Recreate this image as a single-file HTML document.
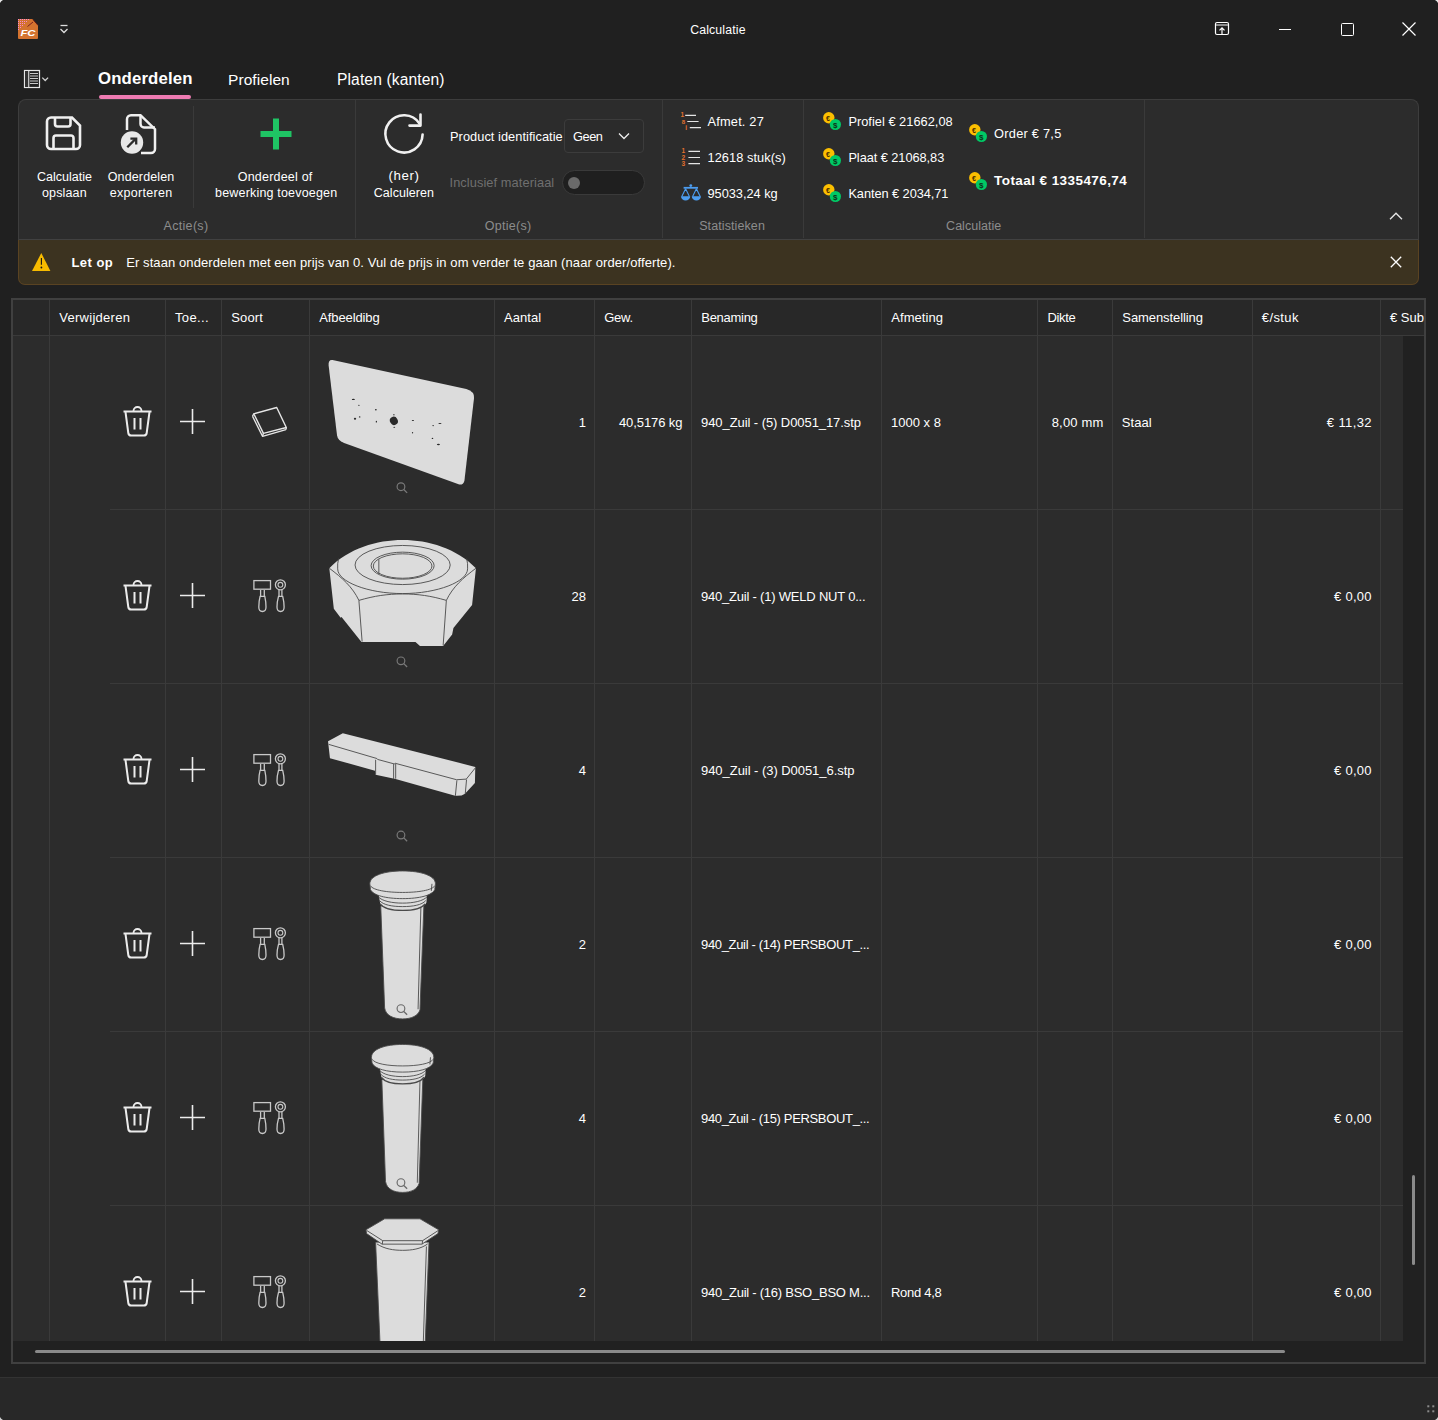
<!DOCTYPE html>
<html><head><meta charset="utf-8"><title>Calculatie</title>
<style>
html,body{margin:0;padding:0;}
body{width:1438px;height:1420px;position:relative;overflow:hidden;background:#202020;font-family:"Liberation Sans", sans-serif;}
.t{position:absolute;line-height:0;white-space:nowrap;}
svg{overflow:visible;}
</style></head><body>
<svg style="position:absolute;left:18px;top:19px;" width="20" height="20" viewBox="0 0 20 20">
<defs><pattern id="pd" width="2" height="2" patternUnits="userSpaceOnUse"><rect x="0" y="0" width="1" height="1" fill="#f48ad0"/></pattern></defs>
<path d="M1 0 H14.5 L20 6.3 V19 a1 1 0 0 1 -1 1 H1 a1 1 0 0 1 -1 -1 V1 a1 1 0 0 1 1 -1 Z" fill="#d4732f"/>
<path d="M0 0 H12 L0 12 Z" fill="url(#pd)"/>
<path d="M15 3 L9.5 7.5" stroke="#7a1f1f" stroke-width="1"/>
<path d="M15 0.5 L20 6.3" stroke="#5a1818" stroke-width="1"/>
<text x="2.5" y="17" font-family="Liberation Sans" font-weight="bold" font-style="italic" font-size="9.6" textLength="15" lengthAdjust="spacingAndGlyphs" fill="#fff">FC</text>
</svg>
<svg style="position:absolute;left:58px;top:23px;" width="12" height="12" viewBox="0 0 12 12"><path d="M2.5 2.5 H9.5" stroke="#ddd" stroke-width="1.3"/><path d="M2.5 6 L6 9.5 L9.5 6" stroke="#ddd" stroke-width="1.3" fill="none"/></svg>
<div class="t" style="left:417.92px;width:600px;text-align:center;top:29.74px;font-size:12.3px;color:#ffffff;letter-spacing:0.143px;">Calculatie</div>
<svg style="position:absolute;left:1214px;top:21px;" width="17" height="16" viewBox="0 0 17 16"><rect x="1.5" y="1.5" width="13" height="12" rx="1.5" fill="none" stroke="#fff" stroke-width="1.2"/><path d="M2 4 H14" stroke="#aaa" stroke-width="1.6"/><path d="M8 13.5 V7 M5.5 9.3 L8 6.8 L10.5 9.3" fill="none" stroke="#fff" stroke-width="1.2"/></svg>
<div style="position:absolute;left:1279px;top:29px;width:12px;height:1px;background:#ffffff;"></div>
<svg style="position:absolute;left:1340px;top:22px;" width="15" height="15" viewBox="0 0 15 15"><rect x="1.5" y="1.5" width="12" height="12" rx="1" fill="none" stroke="#fff" stroke-width="1"/></svg>
<svg style="position:absolute;left:1401px;top:21px;" width="16" height="16" viewBox="0 0 16 16"><path d="M1.5 1.5 L14.5 14.5 M14.5 1.5 L1.5 14.5" stroke="#fff" stroke-width="1.2"/></svg>
<svg style="position:absolute;left:23px;top:69px;" width="27" height="21" viewBox="0 0 27 21">
<rect x="1.5" y="1.5" width="15" height="17" fill="none" stroke="#e6e6e6" stroke-width="1.2"/>
<path d="M5.7 1.5 V18.5" stroke="#e6e6e6" stroke-width="1.2"/><rect x="2.1" y="2.1" width="3" height="15.8" fill="#333"/>
<path d="M7 4.5 H15 M7 7 H15 M7 9.5 H15 M7 12 H15 M7 14.5 H15" stroke="#c8c8c8" stroke-width="1"/>
<path d="M19.3 8.6 L22.2 11.5 L25.1 8.6" fill="none" stroke="#d0d0d0" stroke-width="1.3"/>
</svg>
<div class="t" style="left:98px;top:79.18px;font-size:16.8px;color:#ffffff;font-weight:bold;letter-spacing:0.139px;">Onderdelen</div>
<div style="position:absolute;left:99px;top:95px;width:92px;height:4px;background:#ee7bb2;border-radius:2px;"></div>
<div class="t" style="left:228px;top:79.63px;font-size:15.5px;color:#ffffff;letter-spacing:0.066px;">Profielen</div>
<div class="t" style="left:337px;top:79.59px;font-size:15.6px;color:#ffffff;letter-spacing:0.122px;">Platen (kanten)</div>
<div style="position:absolute;left:18px;top:99px;width:1399px;height:139px;background:#2c2c2c;border:1px solid #3d3d3d;border-bottom:1px solid #414141;border-radius:8px 8px 0 0;"></div>
<div style="position:absolute;left:18px;top:240px;width:1399px;height:44px;background:#3c3320;border:1px solid #5a4322;border-top:none;border-radius:0 0 7px 7px;"></div>
<div style="position:absolute;left:355px;top:100px;width:1px;height:138px;background:#3a3a3a;"></div>
<div style="position:absolute;left:662px;top:100px;width:1px;height:138px;background:#3a3a3a;"></div>
<div style="position:absolute;left:803px;top:100px;width:1px;height:138px;background:#3a3a3a;"></div>
<div style="position:absolute;left:1144px;top:100px;width:1px;height:138px;background:#3a3a3a;"></div>
<div style="position:absolute;left:193px;top:106px;width:1px;height:102px;background:#3a3a3a;"></div>
<svg style="position:absolute;left:45px;top:115px;" width="38" height="38" viewBox="0 0 38 38">
<path d="M6 2.5 H27 L35 10.5 V30 a4 4 0 0 1 -4 4 H6 a4 4 0 0 1 -4 -4 V6.5 a4 4 0 0 1 4 -4 Z" fill="none" stroke="#f0f0f0" stroke-width="2.6"/>
<path d="M10 3 V9 a2.5 2.5 0 0 0 2.5 2.5 H23 a2.5 2.5 0 0 0 2.5 -2.5 V3" fill="none" stroke="#f0f0f0" stroke-width="2.6"/>
<path d="M8.5 34 V23 a2.5 2.5 0 0 1 2.5 -2.5 H26 a2.5 2.5 0 0 1 2.5 2.5 V34" fill="none" stroke="#f0f0f0" stroke-width="2.6"/>
</svg>
<div class="t" style="left:-235.49px;width:600px;text-align:center;top:176.67px;font-size:12.5px;color:#ffffff;letter-spacing:0.012px;">Calculatie</div>
<div class="t" style="left:-235.62px;width:600px;text-align:center;top:192.67px;font-size:12.5px;color:#ffffff;letter-spacing:0.169px;">opslaan</div>
<svg style="position:absolute;left:118px;top:112px;" width="42" height="44" viewBox="0 0 42 44">
<path d="M9 18 V7.2 a4 4 0 0 1 4 -4 H22.5 L37 17.2 V37 a4 4 0 0 1 -4 4 H23" fill="none" stroke="#f0f0f0" stroke-width="2.5"/>
<path d="M22.5 3.2 V12 a3.5 3.5 0 0 0 3.5 3.5 H37" fill="none" stroke="#f0f0f0" stroke-width="2.5"/>
<circle cx="14" cy="30.5" r="11.2" fill="#e8e8e8"/>
<path d="M9.3 35.2 L17.6 26.9" stroke="#2c2c2c" stroke-width="2.3"/><path d="M12.4 26.6 H18.2 V32.4" fill="none" stroke="#2c2c2c" stroke-width="2.3"/>
</svg>
<div class="t" style="left:-158.93px;width:600px;text-align:center;top:176.67px;font-size:12.5px;color:#ffffff;letter-spacing:0.130px;">Onderdelen</div>
<div class="t" style="left:-158.85px;width:600px;text-align:center;top:192.67px;font-size:12.5px;color:#ffffff;letter-spacing:0.304px;">exporteren</div>
<svg style="position:absolute;left:258px;top:116px;" width="36" height="36" viewBox="0 0 36 36"><path d="M18 2.5 V33.5 M2.5 18 H33.5" stroke="#1fc464" stroke-width="6"/></svg>
<div class="t" style="left:-24.90px;width:600px;text-align:center;top:176.67px;font-size:12.5px;color:#ffffff;letter-spacing:0.203px;">Onderdeel of</div>
<div class="t" style="left:-23.81px;width:600px;text-align:center;top:192.67px;font-size:12.5px;color:#ffffff;letter-spacing:0.176px;">bewerking toevoegen</div>
<div class="t" style="left:-114.04px;width:600px;text-align:center;top:225.67px;font-size:12.5px;color:#8c8c8c;letter-spacing:0.319px;">Actie(s)</div>
<svg style="position:absolute;left:380px;top:110px;" width="48" height="48" viewBox="0 0 48 48">
<path d="M42.6 24.5 A18.6 18.6 0 1 1 39.5 13.6" fill="none" stroke="#f0f0f0" stroke-width="2.6" stroke-linecap="round"/>
<path d="M29.5 15.6 H40.5 V4.6" fill="none" stroke="#f0f0f0" stroke-width="2.6" stroke-linecap="round" stroke-linejoin="round"/>
</svg>
<div class="t" style="left:104.05px;width:600px;text-align:center;top:176.39px;font-size:13.3px;color:#ffffff;letter-spacing:0.605px;">(her)</div>
<div class="t" style="left:103.87px;width:600px;text-align:center;top:192.67px;font-size:12.5px;color:#ffffff;letter-spacing:0.038px;">Calculeren</div>
<div class="t" style="left:450px;top:136.56px;font-size:12.8px;color:#ffffff;letter-spacing:0.050px;">Product identificatie</div>
<div style="position:absolute;left:564px;top:119px;width:78px;height:32px;border:1px solid #3c3c3c;border-radius:4px;background:#2b2b2b;"></div>
<div class="t" style="left:573px;top:136.56px;font-size:12.8px;color:#ffffff;letter-spacing:-0.471px;">Geen</div>
<svg style="position:absolute;left:617px;top:131px;" width="14" height="10" viewBox="0 0 14 10"><path d="M2 2.5 L7 7.5 L12 2.5" fill="none" stroke="#eee" stroke-width="1.3"/></svg>
<div class="t" style="left:449.5px;top:182.56px;font-size:12.8px;color:#6f6f6f;letter-spacing:0.086px;">Inclusief materiaal</div>
<div style="position:absolute;left:562px;top:170px;width:81px;height:23px;border:1px solid #3a3a3a;border-radius:13px;background:#1f1f1f;"></div>
<svg style="position:absolute;left:567px;top:176px;" width="14" height="14" viewBox="0 0 14 14"><circle cx="7" cy="7" r="6" fill="#6a6a6a"/></svg>
<div class="t" style="left:208.14px;width:600px;text-align:center;top:225.67px;font-size:12.5px;color:#8c8c8c;letter-spacing:0.278px;">Optie(s)</div>
<svg style="position:absolute;left:680px;top:110px;" width="24" height="22" viewBox="0 0 24 22">
<g font-family="Liberation Sans" font-weight="bold" fill="#e2702c">
<text x="0.6" y="7.2" font-size="6.6">1</text>
<text x="1.8" y="13.8" font-size="6">8</text>
<text x="5.2" y="20.2" font-size="6.6">i</text>
</g>
<path d="M5.2 5.4 H16 M7.3 11.5 H18.6 M9.8 17.7 H21" stroke="#e4e4e4" stroke-width="1.2"/>
</svg>
<div class="t" style="left:707.5px;top:121.56px;font-size:12.8px;color:#ffffff;letter-spacing:0.190px;">Afmet. 27</div>
<svg style="position:absolute;left:680px;top:146px;" width="24" height="22" viewBox="0 0 24 22">
<g font-family="Liberation Sans" font-weight="bold" fill="#e2702c" font-size="6.6">
<text x="1.6" y="7">1</text>
<text x="1.6" y="13.6">2</text>
<text x="1.6" y="19.8">3</text>
</g>
<path d="M8.4 5.3 H20 M8.4 11.5 H20 M8.4 17.7 H20" stroke="#e4e4e4" stroke-width="1.2"/>
</svg>
<div class="t" style="left:707.5px;top:157.56px;font-size:12.8px;color:#ffffff;letter-spacing:0.054px;">12618 stuk(s)</div>
<svg style="position:absolute;left:680px;top:183px;" width="24" height="22" viewBox="0 0 24 22">
<circle cx="10.8" cy="2.6" r="1.4" fill="#4c9df0"/>
<path d="M3.6 4.8 H18" stroke="#4c9df0" stroke-width="1.8"/>
<path d="M5.6 5.8 L1.8 13.6 M5.6 5.8 L9.4 13.6 M16.4 5.8 L12.6 13.6 M16.4 5.8 L20.2 13.6" stroke="#4c9df0" stroke-width="1.1" fill="none"/>
<path d="M1 13.2 H10.2 A4.6 4.4 0 0 1 1 13.2 Z M11.8 13.2 H21 A4.6 4.4 0 0 1 11.8 13.2 Z" fill="#4c9df0"/>
</svg>
<div class="t" style="left:707.5px;top:193.56px;font-size:12.8px;color:#ffffff;letter-spacing:-0.026px;">95033,24 kg</div>
<div class="t" style="left:432.05px;width:600px;text-align:center;top:225.67px;font-size:12.5px;color:#8c8c8c;letter-spacing:0.098px;">Statistieken</div>
<svg style="position:absolute;left:822px;top:111px;" width="22" height="22" viewBox="0 0 22 22">
<circle cx="6.8" cy="6.8" r="5.7" fill="#fcbf00"/>
<text x="4" y="9.5" font-family="Liberation Sans" font-weight="bold" font-size="7.2" fill="#4a2e00">€</text>
<circle cx="13.4" cy="13.5" r="5.6" fill="#00c965"/>
<text x="11" y="16.6" font-family="Liberation Sans" font-weight="bold" font-size="8" fill="#0c3318">$</text>
</svg>
<div class="t" style="left:848.4px;top:121.56px;font-size:12.8px;color:#ffffff;letter-spacing:0.023px;">Profiel € 21662,08</div>
<svg style="position:absolute;left:822px;top:147px;" width="22" height="22" viewBox="0 0 22 22">
<circle cx="6.8" cy="6.8" r="5.7" fill="#fcbf00"/>
<text x="4" y="9.5" font-family="Liberation Sans" font-weight="bold" font-size="7.2" fill="#4a2e00">€</text>
<circle cx="13.4" cy="13.5" r="5.6" fill="#00c965"/>
<text x="11" y="16.6" font-family="Liberation Sans" font-weight="bold" font-size="8" fill="#0c3318">$</text>
</svg>
<div class="t" style="left:848.4px;top:157.56px;font-size:12.8px;color:#ffffff;letter-spacing:-0.060px;">Plaat € 21068,83</div>
<svg style="position:absolute;left:822px;top:183px;" width="22" height="22" viewBox="0 0 22 22">
<circle cx="6.8" cy="6.8" r="5.7" fill="#fcbf00"/>
<text x="4" y="9.5" font-family="Liberation Sans" font-weight="bold" font-size="7.2" fill="#4a2e00">€</text>
<circle cx="13.4" cy="13.5" r="5.6" fill="#00c965"/>
<text x="11" y="16.6" font-family="Liberation Sans" font-weight="bold" font-size="8" fill="#0c3318">$</text>
</svg>
<div class="t" style="left:848.4px;top:193.56px;font-size:12.8px;color:#ffffff;letter-spacing:-0.065px;">Kanten € 2034,71</div>
<svg style="position:absolute;left:968px;top:123px;" width="22" height="22" viewBox="0 0 22 22">
<circle cx="6.8" cy="6.8" r="5.7" fill="#fcbf00"/>
<text x="4" y="9.5" font-family="Liberation Sans" font-weight="bold" font-size="7.2" fill="#4a2e00">€</text>
<circle cx="13.4" cy="13.5" r="5.6" fill="#00c965"/>
<text x="11" y="16.6" font-family="Liberation Sans" font-weight="bold" font-size="8" fill="#0c3318">$</text>
</svg>
<div class="t" style="left:994.1px;top:133.56px;font-size:12.8px;color:#ffffff;letter-spacing:0.246px;">Order € 7,5</div>
<svg style="position:absolute;left:968px;top:171px;" width="22" height="22" viewBox="0 0 22 22">
<circle cx="6.8" cy="6.8" r="5.7" fill="#fcbf00"/>
<text x="4" y="9.5" font-family="Liberation Sans" font-weight="bold" font-size="7.2" fill="#4a2e00">€</text>
<circle cx="13.4" cy="13.5" r="5.6" fill="#00c965"/>
<text x="11" y="16.6" font-family="Liberation Sans" font-weight="bold" font-size="8" fill="#0c3318">$</text>
</svg>
<div class="t" style="left:994.1px;top:181.32px;font-size:13.5px;color:#ffffff;font-weight:bold;letter-spacing:0.423px;">Totaal € 1335476,74</div>
<div class="t" style="left:673.66px;width:600px;text-align:center;top:225.67px;font-size:12.5px;color:#8c8c8c;letter-spacing:0.023px;">Calculatie</div>
<svg style="position:absolute;left:1388px;top:210.3px;" width="16" height="12" viewBox="0 0 16 12"><path d="M2 9.2 L8 3.2 L14 9.2" fill="none" stroke="#e8e8e8" stroke-width="1.3"/></svg>
<svg style="position:absolute;left:31px;top:252px;" width="20" height="20" viewBox="0 0 20 20"><path d="M10.3 1 L19.4 19 H1 Z" fill="#f7bb00"/><path d="M10.4 6.1 V12.7" stroke="#151515" stroke-width="1.1"/><circle cx="10.4" cy="15.5" r="0.9" fill="#151515"/></svg>
<div class="t" style="left:71.4px;top:262.50px;font-size:13px;color:#ffffff;font-weight:bold;letter-spacing:0.481px;">Let op</div>
<div class="t" style="left:126.2px;top:262.50px;font-size:13px;color:#ffffff;letter-spacing:0.092px;">Er staan onderdelen met een prijs van 0. Vul de prijs in om verder te gaan (naar order/offerte).</div>
<svg style="position:absolute;left:1389px;top:255px;" width="14" height="14" viewBox="0 0 14 14"><path d="M1.8 1.8 L12.2 12.2 M12.2 1.8 L1.8 12.2" stroke="#fff" stroke-width="1.3"/></svg>
<div style="position:absolute;left:11px;top:298px;width:1411px;height:1062px;border:2px solid #404040;background:#2c2c2c;"></div>
<div style="position:absolute;left:13px;top:300px;width:1411px;height:35px;background:#282828;"></div>
<div style="position:absolute;left:13px;top:335px;width:1411px;height:1px;background:#3a3a3a;"></div>
<div style="position:absolute;left:1403px;top:336px;width:21px;height:1026px;background:#212121;"></div>
<div style="position:absolute;left:13px;top:1341px;width:1411px;height:21px;background:#212121;"></div>
<div style="position:absolute;left:34.5px;top:1349.6px;width:1250.5px;height:3.6px;background:#8a8a8a;border-radius:2px;"></div>
<div style="position:absolute;left:1411.6px;top:1175px;width:3.6px;height:90px;background:#8a8a8a;border-radius:2px;"></div>
<div style="position:absolute;left:49px;top:300px;width:1px;height:1041px;background:#3a3a3a;"></div>
<div style="position:absolute;left:165px;top:300px;width:1px;height:1041px;background:#3a3a3a;"></div>
<div style="position:absolute;left:221px;top:300px;width:1px;height:1041px;background:#3a3a3a;"></div>
<div style="position:absolute;left:309px;top:300px;width:1px;height:1041px;background:#3a3a3a;"></div>
<div style="position:absolute;left:494px;top:300px;width:1px;height:1041px;background:#3a3a3a;"></div>
<div style="position:absolute;left:594px;top:300px;width:1px;height:1041px;background:#3a3a3a;"></div>
<div style="position:absolute;left:691px;top:300px;width:1px;height:1041px;background:#3a3a3a;"></div>
<div style="position:absolute;left:881px;top:300px;width:1px;height:1041px;background:#3a3a3a;"></div>
<div style="position:absolute;left:1037px;top:300px;width:1px;height:1041px;background:#3a3a3a;"></div>
<div style="position:absolute;left:1112px;top:300px;width:1px;height:1041px;background:#3a3a3a;"></div>
<div style="position:absolute;left:1252px;top:300px;width:1px;height:1041px;background:#3a3a3a;"></div>
<div style="position:absolute;left:1380px;top:300px;width:1px;height:1041px;background:#3a3a3a;"></div>
<div style="position:absolute;left:110px;top:509px;width:1293px;height:1px;background:#3a3a3a;"></div>
<div style="position:absolute;left:110px;top:683px;width:1293px;height:1px;background:#3a3a3a;"></div>
<div style="position:absolute;left:110px;top:857px;width:1293px;height:1px;background:#3a3a3a;"></div>
<div style="position:absolute;left:110px;top:1031px;width:1293px;height:1px;background:#3a3a3a;"></div>
<div style="position:absolute;left:110px;top:1205px;width:1293px;height:1px;background:#3a3a3a;"></div>
<div class="t" style="left:59.3px;top:317.50px;font-size:13px;color:#ffffff;letter-spacing:0.267px;">Verwijderen</div>
<div class="t" style="left:175px;top:317.50px;font-size:13px;color:#ffffff;letter-spacing:0.341px;">Toe...</div>
<div class="t" style="left:231.3px;top:317.50px;font-size:13px;color:#ffffff;letter-spacing:0.132px;">Soort</div>
<div class="t" style="left:319.3px;top:317.50px;font-size:13px;color:#ffffff;letter-spacing:-0.115px;">Afbeeldibg</div>
<div class="t" style="left:504px;top:317.50px;font-size:13px;color:#ffffff;letter-spacing:0.068px;">Aantal</div>
<div class="t" style="left:604.2px;top:317.50px;font-size:13px;color:#ffffff;letter-spacing:-0.275px;">Gew.</div>
<div class="t" style="left:701.3px;top:317.50px;font-size:13px;color:#ffffff;letter-spacing:-0.291px;">Benaming</div>
<div class="t" style="left:891.3px;top:317.50px;font-size:13px;color:#ffffff;letter-spacing:0.057px;">Afmeting</div>
<div class="t" style="left:1047.5px;top:317.50px;font-size:13px;color:#ffffff;letter-spacing:-0.355px;">Dikte</div>
<div class="t" style="left:1122.3px;top:317.50px;font-size:13px;color:#ffffff;letter-spacing:-0.080px;">Samenstelling</div>
<div class="t" style="left:1261.8px;top:317.50px;font-size:13px;color:#ffffff;letter-spacing:0.403px;">€/stuk</div>
<div style="position:absolute;left:1381px;top:300px;width:43px;height:35px;overflow:hidden;"><div class="t" style="left:9px;top:17.50px;font-size:13px;color:#fff">€ Sub</div></div>
<svg style="position:absolute;left:310px;top:340px" width="185" height="170" viewBox="0 0 1438 1321">
<path d="M175 155 L1215 380 Q1280 400 1275 450 L1200 1095 Q1190 1130 1155 1122 L265 800 Q215 780 210 740 L145 200 Q140 150 175 155 Z" fill="#dcdcdc"/>
<g fill="#2a2a2a">
<ellipse cx="652" cy="628" rx="30" ry="33" transform="rotate(-30 652 628)"/>
<ellipse cx="337" cy="462" rx="12" ry="5"/>
<ellipse cx="380" cy="507" rx="6" ry="4"/>
<ellipse cx="512" cy="542" rx="7" ry="5"/>
<ellipse cx="386" cy="598" rx="6" ry="5"/>
<ellipse cx="350" cy="612" rx="9" ry="7"/>
<ellipse cx="516" cy="635" rx="5" ry="7"/>
<ellipse cx="652" cy="580" rx="7" ry="4"/>
<ellipse cx="655" cy="678" rx="7" ry="4"/>
<ellipse cx="800" cy="625" rx="9" ry="4"/>
<ellipse cx="797" cy="720" rx="5" ry="6"/>
<ellipse cx="957" cy="665" rx="6" ry="5"/>
<ellipse cx="1010" cy="648" rx="12" ry="4"/>
<ellipse cx="952" cy="765" rx="6" ry="5"/>
<ellipse cx="998" cy="812" rx="12" ry="5"/>
</g>
<circle cx="707" cy="1140" r="30" fill="none" stroke="#7a7a7a" stroke-width="9"/><path d="M729 1162 L755 1188" stroke="#7a7a7a" stroke-width="10"/>
</svg>
<svg style="position:absolute;left:310px;top:520px" width="185" height="160" viewBox="0 0 1438 1244">
<path d="M150 375 C300 220 520 155 720 155 C920 155 1140 220 1290 375 L1260 660 L1115 840 L1105 890 L1035 980 L855 980 L820 948 L400 948 L245 755 L238 760 L185 690 Z" fill="#dcdcdc"/>
<g fill="none" stroke="#4a4a4a" stroke-width="7">
<path d="M150 375 C250 450 330 520 380 625 C500 590 600 575 720 575 C840 575 940 590 1060 625 C1110 520 1190 450 1290 375"/>
<path d="M380 625 L405 945 M1060 625 L1035 975"/>
<path d="M222 300 Q212 340 215 380 C215 480 450 572 720 572 C990 572 1225 480 1225 380 Q1228 340 1218 300"/>
<ellipse cx="720" cy="350" rx="370" ry="152"/>
<ellipse cx="720" cy="355" rx="245" ry="105"/>
<ellipse cx="720" cy="358" rx="228" ry="95"/>
<path d="M535 305 L535 420"/>
</g>
<circle cx="707" cy="1095" r="30" fill="none" stroke="#7a7a7a" stroke-width="9"/><path d="M729 1117 L755 1143" stroke="#7a7a7a" stroke-width="10"/>
</svg>
<svg style="position:absolute;left:310px;top:700px" width="185" height="160" viewBox="0 0 1438 1244">
<path d="M140 320 L255 258 L1285 520 L1282 645 L1205 728 Q1180 748 1128 745 L665 615 L510 582 L505 550 L155 452 Z" fill="#dcdcdc"/>
<g fill="none" stroke="#4a4a4a" stroke-width="7">
<path d="M145 345 L520 455 L525 462 L655 497 L662 492 L1140 620 L1215 615 L1285 528"/>
<path d="M510 465 L510 580 M650 498 L650 615 M666 495 L666 612 M1142 625 L1130 745 M1217 618 L1207 730"/>
</g>
<circle cx="707" cy="1050" r="30" fill="none" stroke="#7a7a7a" stroke-width="9"/><path d="M729 1072 L755 1098" stroke="#7a7a7a" stroke-width="10"/>
</svg>
<svg style="position:absolute;left:310px;top:860px" width="185" height="170" viewBox="0 0 1438 1321">
<g transform="translate(720 0) scale(1.0 1) translate(-720 0)">
<path d="M550 360 L580 1150 C590 1210 650 1235 720 1235 C790 1235 840 1210 855 1165 L885 360 Z" fill="#dcdcdc"/>
<path d="M530 250 L910 250 L905 330 C890 400 550 400 545 335 Z" fill="#dcdcdc"/>
<path d="M465 185 C465 120 580 85 720 85 C860 85 975 120 975 185 L970 230 C950 275 850 300 720 300 C590 300 490 275 470 230 Z" fill="#dcdcdc"/>
<g fill="none" stroke="#4a4a4a" stroke-width="7">
<path d="M465 185 C465 120 580 85 720 85 C860 85 975 120 975 185 L970 230 C950 275 850 300 720 300 C590 300 490 275 470 230 Z"/>
<path d="M470 200 C490 235 600 252 720 252 C840 252 950 235 970 200"/>
<path d="M948 185 L943 240"/>
<path d="M530 285 C560 320 640 335 720 335 C800 335 880 320 910 285"/>
<path d="M540 315 C570 350 640 362 720 362 C800 362 870 350 900 315"/>
<path d="M545 340 C575 380 640 392 720 392 C800 392 865 380 895 340" stroke-width="10"/>
<path d="M550 360 L580 1150 C590 1210 650 1235 720 1235 C790 1235 840 1210 855 1165 L885 360"/>
<path d="M862 365 L840 1160"/>
</g>
</g>
<circle cx="707" cy="1155" r="30" fill="none" stroke="#6a6a6a" stroke-width="9"/><path d="M729 1177 L755 1203" stroke="#6a6a6a" stroke-width="10"/>
</svg>
<svg style="position:absolute;left:310px;top:1034px" width="185" height="170" viewBox="0 0 1438 1321">
<g transform="translate(720 -4) scale(0.95 1) translate(-720 0)">
<path d="M550 360 L580 1150 C590 1210 650 1235 720 1235 C790 1235 840 1210 855 1165 L885 360 Z" fill="#dcdcdc"/>
<path d="M530 250 L910 250 L905 330 C890 400 550 400 545 335 Z" fill="#dcdcdc"/>
<path d="M465 185 C465 120 580 85 720 85 C860 85 975 120 975 185 L970 230 C950 275 850 300 720 300 C590 300 490 275 470 230 Z" fill="#dcdcdc"/>
<g fill="none" stroke="#4a4a4a" stroke-width="7">
<path d="M465 185 C465 120 580 85 720 85 C860 85 975 120 975 185 L970 230 C950 275 850 300 720 300 C590 300 490 275 470 230 Z"/>
<path d="M470 200 C490 235 600 252 720 252 C840 252 950 235 970 200"/>
<path d="M948 185 L943 240"/>
<path d="M530 285 C560 320 640 335 720 335 C800 335 880 320 910 285"/>
<path d="M540 315 C570 350 640 362 720 362 C800 362 870 350 900 315"/>
<path d="M545 340 C575 380 640 392 720 392 C800 392 865 380 895 340" stroke-width="10"/>
<path d="M550 360 L580 1150 C590 1210 650 1235 720 1235 C790 1235 840 1210 855 1165 L885 360"/>
<path d="M862 365 L840 1160"/>
</g>
</g>
<circle cx="707" cy="1155" r="30" fill="none" stroke="#6a6a6a" stroke-width="9"/><path d="M729 1177 L755 1203" stroke="#6a6a6a" stroke-width="10"/>
</svg>
<div style="position:absolute;left:310px;top:1204px;width:185px;height:137px;overflow:hidden;"><svg style="position:absolute;left:0;top:0" width="185" height="140" viewBox="0 0 1438 1088">
<path d="M510 300 L545 1100 L895 1100 L925 300 Z" fill="#dcdcdc"/>
<path d="M435 200 L580 115 L855 115 L1000 200 L995 230 L870 312 L560 312 L440 230 Z" fill="#dcdcdc"/>
<g fill="none" stroke="#4a4a4a" stroke-width="7">
<path d="M435 200 L580 115 L855 115 L1000 200 L995 230 L870 312 L560 312 L440 230 Z"/>
<path d="M440 205 L565 285 L875 285 L998 205"/>
<path d="M565 285 L562 312 M875 285 L872 312"/>
<path d="M520 310 C580 350 650 360 720 360 C790 360 860 350 915 310"/>
<path d="M510 300 L545 1100 M925 300 L895 1100 M905 330 L880 1100"/>
</g>
</svg></div>
<svg style="position:absolute;left:121px;top:404px;" width="32" height="34" viewBox="0 0 32 34">
<path d="M2.5 7.5 H30.5" stroke="#ececec" stroke-width="2"/>
<path d="M12.5 7 a4 4 0 0 1 8 0" fill="none" stroke="#ececec" stroke-width="1.8"/>
<path d="M4.5 8 L7.3 29 a3 3 0 0 0 3 2.6 H22.7 a3 3 0 0 0 3 -2.6 L28.5 8" fill="none" stroke="#ececec" stroke-width="2"/>
<path d="M13.5 14 V25.5 M19.5 14 V25.5" stroke="#ececec" stroke-width="2"/>
</svg>
<svg style="position:absolute;left:179px;top:408px;" width="27" height="27" viewBox="0 0 27 27"><path d="M13.5 1 V26 M1 13.5 H26" stroke="#ececec" stroke-width="1.6"/></svg>
<svg style="position:absolute;left:250px;top:405px;" width="40" height="34" viewBox="0 0 40 34">
<path d="M3.8 -3.2 L26.7 -9.5 L36.3 10.5 L13.4 16.4 Z" transform="translate(0,12)" fill="none" stroke="#e6e6e6" stroke-width="1.4" stroke-linejoin="round"/>
<path d="M2.5 -0.7 L12.5 19.3 L35.9 12.6" transform="translate(0,12)" fill="none" stroke="#e6e6e6" stroke-width="1.4" stroke-linejoin="round"/>
<path d="M2.5 -0.7 L3.8 -3.2 M12.5 19.3 L13.4 16.4 M35.9 12.6 L36.3 10.5" transform="translate(0,12)" fill="none" stroke="#e6e6e6" stroke-width="1.4"/>
</svg>
<div class="t" style="right:852.00px;top:422.80px;font-size:13px;color:#ffffff;">1</div>
<div class="t" style="right:755.58px;top:422.80px;font-size:13px;color:#ffffff;letter-spacing:-0.082px;">40,5176 kg</div>
<div class="t" style="left:701px;top:422.80px;font-size:13px;color:#ffffff;letter-spacing:-0.072px;">940_Zuil - (5) D0051_17.stp</div>
<div class="t" style="left:891px;top:422.80px;font-size:13px;color:#ffffff;letter-spacing:0.018px;">1000 x 8</div>
<div class="t" style="right:334.53px;top:422.80px;font-size:13px;color:#ffffff;letter-spacing:0.171px;">8,00 mm</div>
<div class="t" style="left:1121.8px;top:422.80px;font-size:13px;color:#ffffff;letter-spacing:0.067px;">Staal</div>
<div class="t" style="right:66.00px;top:422.80px;font-size:13px;color:#ffffff;letter-spacing:0.399px;">€ 11,32</div>
<svg style="position:absolute;left:121px;top:578px;" width="32" height="34" viewBox="0 0 32 34">
<path d="M2.5 7.5 H30.5" stroke="#ececec" stroke-width="2"/>
<path d="M12.5 7 a4 4 0 0 1 8 0" fill="none" stroke="#ececec" stroke-width="1.8"/>
<path d="M4.5 8 L7.3 29 a3 3 0 0 0 3 2.6 H22.7 a3 3 0 0 0 3 -2.6 L28.5 8" fill="none" stroke="#ececec" stroke-width="2"/>
<path d="M13.5 14 V25.5 M19.5 14 V25.5" stroke="#ececec" stroke-width="2"/>
</svg>
<svg style="position:absolute;left:179px;top:582px;" width="27" height="27" viewBox="0 0 27 27"><path d="M13.5 1 V26 M1 13.5 H26" stroke="#ececec" stroke-width="1.6"/></svg>
<svg style="position:absolute;left:251px;top:578px;" width="36" height="36" viewBox="0 0 36 36">
<g fill="none" stroke="#c8c8c8" stroke-width="1.3">
<rect x="2.9" y="2.6" width="16.6" height="8.6"/>
<path d="M9.6 11.9 V18.4 M13.3 11.9 V18.4"/>
<path d="M9.1 18.4 C8.1 22 7.8 25 7.8 29 C7.8 32 9 33.5 11.4 33.5 C13.8 33.5 15 32 15 29 C15 25 14.6 22 13.8 18.4 Z"/>
<circle cx="29.4" cy="6.8" r="5"/>
<circle cx="29.4" cy="6.8" r="2.4" stroke-width="1.1"/>
<path d="M28 11.7 V18.4 M30.9 11.7 V18.4"/>
<path d="M27.5 18.4 C26.5 22 26 25 26 29 C26 32 27.2 33.5 29.6 33.5 C32 33.5 33.1 32 33.1 29 C33.1 25 32.6 22 31.7 18.4 Z"/>
</g>
</svg>
<div class="t" style="right:852.00px;top:596.80px;font-size:13px;color:#ffffff;">28</div>
<div class="t" style="left:701px;top:596.80px;font-size:13px;color:#ffffff;letter-spacing:-0.209px;">940_Zuil - (1) WELD NUT 0...</div>
<div class="t" style="right:66.11px;top:596.80px;font-size:13px;color:#ffffff;letter-spacing:0.291px;">€ 0,00</div>
<svg style="position:absolute;left:121px;top:752px;" width="32" height="34" viewBox="0 0 32 34">
<path d="M2.5 7.5 H30.5" stroke="#ececec" stroke-width="2"/>
<path d="M12.5 7 a4 4 0 0 1 8 0" fill="none" stroke="#ececec" stroke-width="1.8"/>
<path d="M4.5 8 L7.3 29 a3 3 0 0 0 3 2.6 H22.7 a3 3 0 0 0 3 -2.6 L28.5 8" fill="none" stroke="#ececec" stroke-width="2"/>
<path d="M13.5 14 V25.5 M19.5 14 V25.5" stroke="#ececec" stroke-width="2"/>
</svg>
<svg style="position:absolute;left:179px;top:756px;" width="27" height="27" viewBox="0 0 27 27"><path d="M13.5 1 V26 M1 13.5 H26" stroke="#ececec" stroke-width="1.6"/></svg>
<svg style="position:absolute;left:251px;top:752px;" width="36" height="36" viewBox="0 0 36 36">
<g fill="none" stroke="#c8c8c8" stroke-width="1.3">
<rect x="2.9" y="2.6" width="16.6" height="8.6"/>
<path d="M9.6 11.9 V18.4 M13.3 11.9 V18.4"/>
<path d="M9.1 18.4 C8.1 22 7.8 25 7.8 29 C7.8 32 9 33.5 11.4 33.5 C13.8 33.5 15 32 15 29 C15 25 14.6 22 13.8 18.4 Z"/>
<circle cx="29.4" cy="6.8" r="5"/>
<circle cx="29.4" cy="6.8" r="2.4" stroke-width="1.1"/>
<path d="M28 11.7 V18.4 M30.9 11.7 V18.4"/>
<path d="M27.5 18.4 C26.5 22 26 25 26 29 C26 32 27.2 33.5 29.6 33.5 C32 33.5 33.1 32 33.1 29 C33.1 25 32.6 22 31.7 18.4 Z"/>
</g>
</svg>
<div class="t" style="right:852.00px;top:770.80px;font-size:13px;color:#ffffff;">4</div>
<div class="t" style="left:701px;top:770.80px;font-size:13px;color:#ffffff;letter-spacing:-0.046px;">940_Zuil - (3) D0051_6.stp</div>
<div class="t" style="right:66.11px;top:770.80px;font-size:13px;color:#ffffff;letter-spacing:0.291px;">€ 0,00</div>
<svg style="position:absolute;left:121px;top:926px;" width="32" height="34" viewBox="0 0 32 34">
<path d="M2.5 7.5 H30.5" stroke="#ececec" stroke-width="2"/>
<path d="M12.5 7 a4 4 0 0 1 8 0" fill="none" stroke="#ececec" stroke-width="1.8"/>
<path d="M4.5 8 L7.3 29 a3 3 0 0 0 3 2.6 H22.7 a3 3 0 0 0 3 -2.6 L28.5 8" fill="none" stroke="#ececec" stroke-width="2"/>
<path d="M13.5 14 V25.5 M19.5 14 V25.5" stroke="#ececec" stroke-width="2"/>
</svg>
<svg style="position:absolute;left:179px;top:930px;" width="27" height="27" viewBox="0 0 27 27"><path d="M13.5 1 V26 M1 13.5 H26" stroke="#ececec" stroke-width="1.6"/></svg>
<svg style="position:absolute;left:251px;top:926px;" width="36" height="36" viewBox="0 0 36 36">
<g fill="none" stroke="#c8c8c8" stroke-width="1.3">
<rect x="2.9" y="2.6" width="16.6" height="8.6"/>
<path d="M9.6 11.9 V18.4 M13.3 11.9 V18.4"/>
<path d="M9.1 18.4 C8.1 22 7.8 25 7.8 29 C7.8 32 9 33.5 11.4 33.5 C13.8 33.5 15 32 15 29 C15 25 14.6 22 13.8 18.4 Z"/>
<circle cx="29.4" cy="6.8" r="5"/>
<circle cx="29.4" cy="6.8" r="2.4" stroke-width="1.1"/>
<path d="M28 11.7 V18.4 M30.9 11.7 V18.4"/>
<path d="M27.5 18.4 C26.5 22 26 25 26 29 C26 32 27.2 33.5 29.6 33.5 C32 33.5 33.1 32 33.1 29 C33.1 25 32.6 22 31.7 18.4 Z"/>
</g>
</svg>
<div class="t" style="right:852.00px;top:944.80px;font-size:13px;color:#ffffff;">2</div>
<div class="t" style="left:701px;top:944.80px;font-size:13px;color:#ffffff;letter-spacing:-0.334px;">940_Zuil - (14) PERSBOUT_...</div>
<div class="t" style="right:66.11px;top:944.80px;font-size:13px;color:#ffffff;letter-spacing:0.291px;">€ 0,00</div>
<svg style="position:absolute;left:121px;top:1100px;" width="32" height="34" viewBox="0 0 32 34">
<path d="M2.5 7.5 H30.5" stroke="#ececec" stroke-width="2"/>
<path d="M12.5 7 a4 4 0 0 1 8 0" fill="none" stroke="#ececec" stroke-width="1.8"/>
<path d="M4.5 8 L7.3 29 a3 3 0 0 0 3 2.6 H22.7 a3 3 0 0 0 3 -2.6 L28.5 8" fill="none" stroke="#ececec" stroke-width="2"/>
<path d="M13.5 14 V25.5 M19.5 14 V25.5" stroke="#ececec" stroke-width="2"/>
</svg>
<svg style="position:absolute;left:179px;top:1104px;" width="27" height="27" viewBox="0 0 27 27"><path d="M13.5 1 V26 M1 13.5 H26" stroke="#ececec" stroke-width="1.6"/></svg>
<svg style="position:absolute;left:251px;top:1100px;" width="36" height="36" viewBox="0 0 36 36">
<g fill="none" stroke="#c8c8c8" stroke-width="1.3">
<rect x="2.9" y="2.6" width="16.6" height="8.6"/>
<path d="M9.6 11.9 V18.4 M13.3 11.9 V18.4"/>
<path d="M9.1 18.4 C8.1 22 7.8 25 7.8 29 C7.8 32 9 33.5 11.4 33.5 C13.8 33.5 15 32 15 29 C15 25 14.6 22 13.8 18.4 Z"/>
<circle cx="29.4" cy="6.8" r="5"/>
<circle cx="29.4" cy="6.8" r="2.4" stroke-width="1.1"/>
<path d="M28 11.7 V18.4 M30.9 11.7 V18.4"/>
<path d="M27.5 18.4 C26.5 22 26 25 26 29 C26 32 27.2 33.5 29.6 33.5 C32 33.5 33.1 32 33.1 29 C33.1 25 32.6 22 31.7 18.4 Z"/>
</g>
</svg>
<div class="t" style="right:852.00px;top:1118.80px;font-size:13px;color:#ffffff;">4</div>
<div class="t" style="left:701px;top:1118.80px;font-size:13px;color:#ffffff;letter-spacing:-0.334px;">940_Zuil - (15) PERSBOUT_...</div>
<div class="t" style="right:66.11px;top:1118.80px;font-size:13px;color:#ffffff;letter-spacing:0.291px;">€ 0,00</div>
<svg style="position:absolute;left:121px;top:1274px;" width="32" height="34" viewBox="0 0 32 34">
<path d="M2.5 7.5 H30.5" stroke="#ececec" stroke-width="2"/>
<path d="M12.5 7 a4 4 0 0 1 8 0" fill="none" stroke="#ececec" stroke-width="1.8"/>
<path d="M4.5 8 L7.3 29 a3 3 0 0 0 3 2.6 H22.7 a3 3 0 0 0 3 -2.6 L28.5 8" fill="none" stroke="#ececec" stroke-width="2"/>
<path d="M13.5 14 V25.5 M19.5 14 V25.5" stroke="#ececec" stroke-width="2"/>
</svg>
<svg style="position:absolute;left:179px;top:1278px;" width="27" height="27" viewBox="0 0 27 27"><path d="M13.5 1 V26 M1 13.5 H26" stroke="#ececec" stroke-width="1.6"/></svg>
<svg style="position:absolute;left:251px;top:1274px;" width="36" height="36" viewBox="0 0 36 36">
<g fill="none" stroke="#c8c8c8" stroke-width="1.3">
<rect x="2.9" y="2.6" width="16.6" height="8.6"/>
<path d="M9.6 11.9 V18.4 M13.3 11.9 V18.4"/>
<path d="M9.1 18.4 C8.1 22 7.8 25 7.8 29 C7.8 32 9 33.5 11.4 33.5 C13.8 33.5 15 32 15 29 C15 25 14.6 22 13.8 18.4 Z"/>
<circle cx="29.4" cy="6.8" r="5"/>
<circle cx="29.4" cy="6.8" r="2.4" stroke-width="1.1"/>
<path d="M28 11.7 V18.4 M30.9 11.7 V18.4"/>
<path d="M27.5 18.4 C26.5 22 26 25 26 29 C26 32 27.2 33.5 29.6 33.5 C32 33.5 33.1 32 33.1 29 C33.1 25 32.6 22 31.7 18.4 Z"/>
</g>
</svg>
<div class="t" style="right:852.00px;top:1292.80px;font-size:13px;color:#ffffff;">2</div>
<div class="t" style="left:701px;top:1292.80px;font-size:13px;color:#ffffff;letter-spacing:-0.243px;">940_Zuil - (16) BSO_BSO M...</div>
<div class="t" style="left:891px;top:1292.80px;font-size:13px;color:#ffffff;letter-spacing:-0.295px;">Rond 4,8</div>
<div class="t" style="right:66.11px;top:1292.80px;font-size:13px;color:#ffffff;letter-spacing:0.291px;">€ 0,00</div>
<svg style="position:absolute;left:0px;top:0px;" width="4" height="4" viewBox="0 0 4 4"><path d="M0 0 H3 Q1 1 0 3 Z" fill="#e8e8e8"/></svg>
<svg style="position:absolute;left:1434px;top:0px;" width="4" height="4" viewBox="0 0 4 4"><path d="M4 0 H1 Q3 1 4 3 Z" fill="#e8e8e8"/></svg>
<div style="position:absolute;left:0px;top:1377px;width:1438px;height:1px;background:#333333;"></div>
<div style="position:absolute;left:0px;top:1378px;width:1438px;height:42px;background:#282828;"></div>
<svg style="position:absolute;left:0px;top:1416px;" width="4" height="4" viewBox="0 0 4 4"><path d="M0 1 V4 H3 Q1 3 0 1 Z" fill="#d0d0d0"/></svg>
<svg style="position:absolute;left:1434px;top:1416px;" width="4" height="4" viewBox="0 0 4 4"><path d="M4 1 V4 H1 Q3 3 4 1 Z" fill="#d0d0d0"/></svg>
<svg style="position:absolute;left:1424px;top:1403px;" width="14" height="14" viewBox="0 0 14 14"><g fill="#8a8a8a"><rect x="3.3" y="2.3" width="2" height="2"/><rect x="8.3" y="2.3" width="2" height="2"/><rect x="3.3" y="7.3" width="2" height="2"/><rect x="8.3" y="7.3" width="2" height="2"/></g></svg>
</body></html>
